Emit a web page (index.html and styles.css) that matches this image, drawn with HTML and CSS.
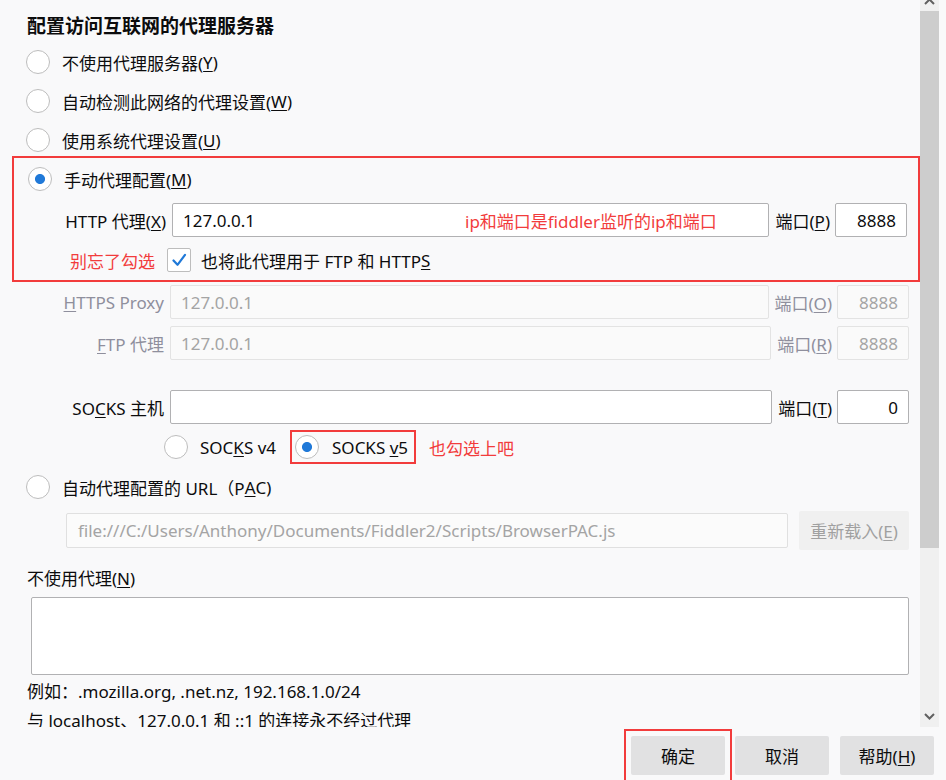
FILE: index.html
```html
<!DOCTYPE html>
<html lang="zh-CN">
<head>
    <meta charset="UTF-8">
    <title>连接设置</title>
    <link rel="stylesheet" href="styles.css">
</head>
<body>
    <div class="window">
        <div class="main">
            <div class="content">
                <h1 class="title">配置访问互联网的代理服务器</h1>
                <div class="radio-row"><span class="radio"></span>不使用代理服务器(<u>Y</u>)</div>
                <div class="radio-row"><span class="radio"></span>自动检测此网络的代理设置(<u>W</u>)</div>
                <div class="radio-row"><span class="radio"></span>使用系统代理设置(<u>U</u>)</div>

                <div class="mark manual">
                    <div class="radio-row"><span class="radio checked"></span>手动代理配置(<u>M</u>)</div>
                    <div class="proxy-row">
                        <span class="proxy-label">HTTP 代理(<u>X</u>)</span>
                        <div class="field">127.0.0.1<span class="note">ip和端口是fiddler监听的ip和端口</span></div>
                        <span class="port-label">端口(<u>P</u>)</span>
                        <div class="field port">8888</div>
                    </div>
                    <div class="check-row">
                        <span class="hint">别忘了勾选</span>
                        <span class="checkbox">
                            <svg width="24" height="24" viewBox="0 0 24 24"><path d="M6.5 12.5 L10.5 16.8 L18 6.8" fill="none" stroke="#2079d8" stroke-width="2.2" stroke-linecap="round" stroke-linejoin="round"/></svg>
                        </span>
                        也将此代理用于 FTP 和 HTTP<u>S</u>
                    </div>
                </div>

                <div class="proxy-row disabled https-row">
                    <span class="proxy-label"><u>H</u>TTPS Proxy</span>
                    <div class="field">127.0.0.1</div>
                    <span class="port-label">端口(<u>O</u>)</span>
                    <div class="field port">8888</div>
                </div>
                <div class="proxy-row disabled ftp-row">
                    <span class="proxy-label"><u>F</u>TP 代理</span>
                    <div class="field">127.0.0.1</div>
                    <span class="port-label">端口(<u>R</u>)</span>
                    <div class="field port">8888</div>
                </div>
                <div class="proxy-row socks-row">
                    <span class="proxy-label">SO<u>C</u>KS 主机</span>
                    <div class="field"></div>
                    <span class="port-label">端口(<u>T</u>)</span>
                    <div class="field port">0</div>
                </div>
                <div class="version-row">
                    <span class="radio"></span>
                    <span class="version-text">SOC<u>K</u>S v4</span>
                    <span class="mark version-box"><span class="radio checked"></span><span class="version-text">SOCKS <u>v</u>5</span></span>
                    <span class="hint">也勾选上吧</span>
                </div>

                <div class="radio-row pac-radio"><span class="radio"></span>自动代理配置的 URL（P<u>A</u>C)</div>
                <div class="pac-row">
                    <div class="field disabled-field">file:///C:/Users/Anthony/Documents/Fiddler2/Scripts/BrowserPAC.js</div>
                    <button class="btn reload">重新载入(<u>E</u>)</button>
                </div>

                <div class="plain-label">不使用代理(<u>N</u>)</div>
                <div class="textarea"></div>
                <div class="plain-label example">例如：.mozilla.org, .net.nz, 192.168.1.0/24</div>
                <div class="plain-label example">与 localhost、127.0.0.1 和 ::1 的连接永不经过代理</div>
            </div>

            <div class="scrollbar">
                <div class="sb-up">
                    <svg width="19" height="11" viewBox="0 0 19 11"><path d="M5 4 L9.5 -0.5 L14 4" fill="none" stroke="#606060" stroke-width="2"/></svg>
                </div>
                <div class="sb-thumb"></div>
                <div class="sb-track"></div>
                <div class="sb-down">
                    <svg width="19" height="19" viewBox="0 0 19 19"><path d="M5 6 L9.5 10.5 L14 6" fill="none" stroke="#606060" stroke-width="2"/></svg>
                </div>
            </div>
        </div>

        <div class="footer">
            <span class="mark ok-box"><button class="btn">确定</button></span>
            <button class="btn side cancel">取消</button>
            <button class="btn side">帮助(<u>H</u>)</button>
        </div>
    </div>
</body>
</html>
```

FILE: styles.css
```css
* {
    box-sizing: border-box;
}
body {
    margin: 0;
    background: #f9f9fa;
    color: #0c0c0d;
    font-family: "Noto Sans", "Noto Sans CJK SC", sans-serif;
    font-size: 17px;
}
u {
    text-decoration-thickness: 1px;
    text-underline-offset: 2px;
}
.window {
    width: 946px;
    height: 780px;
    display: flex;
    flex-direction: column;
    overflow: hidden;
}
.main {
    height: 727px;
    display: flex;
    flex-shrink: 0;
}
.content {
    width: 920px;
    height: 727px;
    overflow: hidden;
    padding: 15px 0 0 14px;
}
.title {
    margin: 0 0 0 13px;
    height: 23px;
    font-size: 19px;
    font-weight: bold;
    line-height: 23px;
}

/* radio / checkbox */
.radio-row {
    height: 30px;
    margin-top: 9px;
    padding-left: 12px;
    display: flex;
    align-items: center;
}
.radio {
    width: 24px;
    height: 24px;
    border: 1px solid #bdbdbd;
    border-radius: 50%;
    background: #fff;
    flex-shrink: 0;
    margin-right: 12px;
}
.radio.checked {
    background: radial-gradient(circle, #2079d8 0, #2079d8 4.6px, #fff 5.4px);
}
.checkbox {
    width: 24px;
    height: 24px;
    border: 1px solid #bdbdbd;
    border-radius: 2px;
    background: #fff;
    display: flex;
    align-items: center;
    justify-content: center;
    margin: 0 10px 0 2px;
}
.checkbox svg {
    display: block;
    margin: -1px;
}

/* red annotation boxes */
.mark {
    border: 2px solid #f23c3c;
}
.hint {
    color: #f23c3c;
}
.manual {
    margin: 1px 0 0 -2px;
    padding: 0 0 5px 2px;
}
.manual .radio-row {
    margin-top: 6px;
}

/* proxy rows */
.proxy-row {
    display: flex;
    align-items: center;
    height: 34px;
    margin-top: 9px;
    padding-right: 11px;
}
.proxy-label {
    width: 150px;
    text-align: right;
    margin-right: 6px;
    white-space: nowrap;
}
.field {
    flex: 1;
    height: 34px;
    border: 1px solid #b1b1b3;
    border-radius: 2px;
    background: #fff;
    padding: 0 10px;
    display: flex;
    align-items: center;
    position: relative;
    white-space: nowrap;
    overflow: hidden;
}
.field.port {
    flex: none;
    width: 72px;
    justify-content: flex-end;
}
.port-label {
    margin: 0 5px 0 6px;
    white-space: nowrap;
}
.note {
    position: absolute;
    left: 292px;
    color: #f23c3c;
}
.check-row {
    display: flex;
    align-items: center;
    height: 30px;
    margin-top: 8px;
}
.check-row .hint {
    width: 149px;
    text-align: right;
    padding-right: 10px;
}
.disabled {
    color: #8f8f9d;
}
.disabled .field {
    border-color: #e3e3e3;
    background: #fafafa;
    color: #a4a4a4;
}
.https-row {
    margin-top: 3px;
}
.ftp-row {
    margin-top: 7px;
}
.socks-row {
    margin-top: 30px;
}
.version-row {
    display: flex;
    align-items: center;
    height: 34px;
    margin-top: 6px;
    padding-left: 150px;
}
.version-row .radio {
    margin-right: 12px;
}
.version-box {
    display: flex;
    align-items: center;
    height: 34px;
    margin-left: 14px;
    padding: 0 6px 0 3px;
}
.version-box .radio {
    margin-right: 13px;
}
.version-row .hint {
    margin-left: 13px;
}

/* PAC */
.pac-radio {
    margin-top: 8px;
}
.pac-row {
    display: flex;
    align-items: center;
    height: 39px;
    margin-top: 9px;
    padding: 0 11px 0 52px;
}
.disabled-field {
    height: 35px;
    border-color: #e0e0e0;
    background: #fbfbfb;
    color: #a4a4a4;
    padding-left: 11px;
}
.btn {
    width: 94px;
    height: 39px;
    border: none;
    border-radius: 2px;
    background: #e1e1e2;
    font: inherit;
    color: #0c0c0d;
    padding: 0;
}
.btn.reload {
    width: 110px;
    margin-left: 11px;
    background: #f0f0f0;
    color: #a0a0a0;
}
.plain-label {
    margin: 18px 0 0 13px;
    height: 22px;
    line-height: 22px;
    white-space: nowrap;
}
.textarea {
    margin: 7px 11px 0 17px;
    height: 78px;
    border: 1px solid #b1b1b3;
    border-radius: 2px;
    background: #fff;
}
.example {
    margin-top: 6px;
}
.example + .example {
    margin-top: 7px;
}

/* scrollbar */
.scrollbar {
    width: 19px;
    height: 727px;
    background: #f0f0f0;
    display: flex;
    flex-direction: column;
}
.sb-up {
    height: 11px;
}
.sb-up svg, .sb-down svg {
    display: block;
}
.sb-thumb {
    height: 537px;
    background: #cdcdcd;
}
.sb-track {
    flex: 1;
}
.sb-down {
    height: 19px;
}

/* footer */
.footer {
    flex: 1;
    display: flex;
    justify-content: flex-end;
    align-items: flex-start;
    padding: 2px 12px 0 0;
}
.ok-box {
    padding: 5px 5px 8px;
    margin-right: 3px;
}
.btn.side {
    margin-top: 7px;
}
.cancel {
    margin-right: 11px;
}
```
